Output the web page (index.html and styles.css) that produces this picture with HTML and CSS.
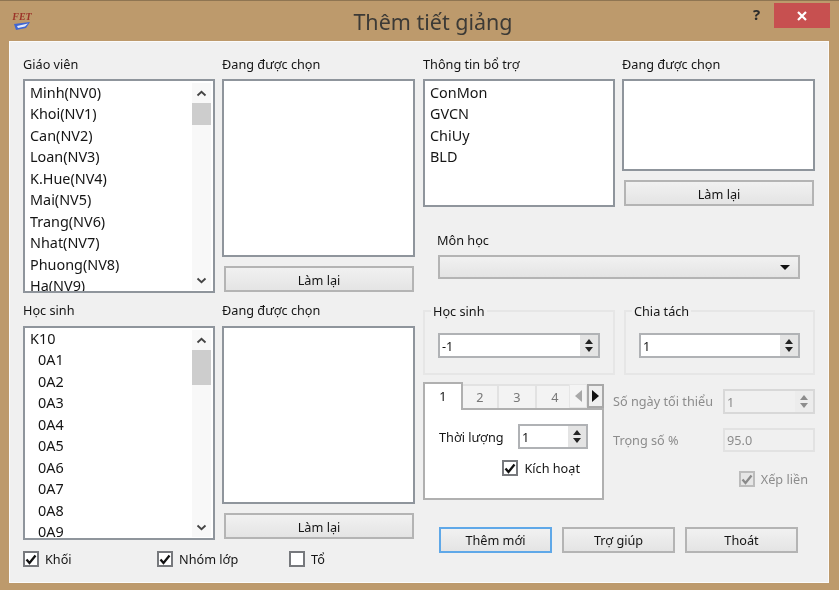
FILE: index.html
```html
<!DOCTYPE html>
<html lang="vi">
<head>
    <meta charset="UTF-8">
    <meta name="viewport" content="width=device-width, initial-scale=1.0">
    <title>Thêm tiết giảng</title>
    <link rel="stylesheet" href="styles.css">
</head>
<body>
    <div class="window">
        <div class="titlebar">
            <div class="appIcon">
                <span class="appIconText">FET</span>
                <svg width="16" height="8" viewBox="0 0 16 8"><polygon points="0,2 16,0 12,6 2,8" fill="#3f66d2"/><polygon points="3,4 14,1.5 11,4.5 4,6" fill="#e4eaf8"/></svg>
            </div>
            <div class="winTitle">Thêm tiết giảng</div>
            <div class="helpBtn">?</div>
            <div class="closeBtn">
                <svg width="12" height="12" viewBox="0 0 12 12"><path d="M2 2 L10 10 M10 2 L2 10" stroke="#fff" stroke-width="2.2"/></svg>
            </div>
        </div>
        <div class="client">
            <div class="colLeft">
                <div class="pick">
                    <div class="pickCol">
                        <div class="lbl">Giáo viên</div>
                        <div class="list listFull">
                            <div class="rows">
                                <div>Minh(NV0)</div>
                                <div>Khoi(NV1)</div>
                                <div>Can(NV2)</div>
                                <div>Loan(NV3)</div>
                                <div>K.Hue(NV4)</div>
                                <div>Mai(NV5)</div>
                                <div>Trang(NV6)</div>
                                <div>Nhat(NV7)</div>
                                <div>Phuong(NV8)</div>
                                <div>Ha(NV9)</div>
                            </div>
                            <div class="vbar">
                                <svg class="chev" width="11" height="7" viewBox="0 0 11 7"><path d="M1.5 5.5 L5.5 1.8 L9.5 5.5" fill="none" stroke="#444" stroke-width="1.8"/></svg>
                                <div class="track"><div class="thumb thumbA"></div></div>
                                <svg class="chev" width="11" height="7" viewBox="0 0 11 7"><path d="M1.5 1.5 L5.5 5.2 L9.5 1.5" fill="none" stroke="#444" stroke-width="1.8"/></svg>
                            </div>
                        </div>
                    </div>
                    <div class="pickCol">
                        <div class="lbl">Đang được chọn</div>
                        <div class="list listGrow"></div>
                        <button class="btn btnReset">Làm lại</button>
                    </div>
                </div>
                <div class="pick pickSecond">
                    <div class="pickCol">
                        <div class="lbl">Học sinh</div>
                        <div class="list listFull">
                            <div class="rows">
                                <div>K10</div>
                                <div class="sub">0A1</div>
                                <div class="sub">0A2</div>
                                <div class="sub">0A3</div>
                                <div class="sub">0A4</div>
                                <div class="sub">0A5</div>
                                <div class="sub">0A6</div>
                                <div class="sub">0A7</div>
                                <div class="sub">0A8</div>
                                <div class="sub">0A9</div>
                            </div>
                            <div class="vbar">
                                <svg class="chev" width="11" height="7" viewBox="0 0 11 7"><path d="M1.5 5.5 L5.5 1.8 L9.5 5.5" fill="none" stroke="#444" stroke-width="1.8"/></svg>
                                <div class="track"><div class="thumb thumbB"></div></div>
                                <svg class="chev" width="11" height="7" viewBox="0 0 11 7"><path d="M1.5 1.5 L5.5 5.2 L9.5 1.5" fill="none" stroke="#444" stroke-width="1.8"/></svg>
                            </div>
                        </div>
                    </div>
                    <div class="pickCol">
                        <div class="lbl">Đang được chọn</div>
                        <div class="list listGrow"></div>
                        <button class="btn btnReset">Làm lại</button>
                    </div>
                </div>
                <div class="checkRow">
                    <div class="check checkKhoi"><span class="box on"><svg width="12" height="11" viewBox="0 0 12 11"><path d="M1.5 5.5 L4.5 9 L10.5 1.5" fill="none" stroke="#111" stroke-width="2.3"/></svg></span>Khối</div>
                    <div class="check checkNhom"><span class="box on"><svg width="12" height="11" viewBox="0 0 12 11"><path d="M1.5 5.5 L4.5 9 L10.5 1.5" fill="none" stroke="#111" stroke-width="2.3"/></svg></span>Nhóm lớp</div>
                    <div class="check"><span class="box"></span>Tổ</div>
                </div>
            </div>
            <div class="colRight">
                <div class="pick pickInfo">
                    <div class="pickCol">
                        <div class="lbl">Thông tin bổ trợ</div>
                        <div class="list listFull">
                            <div class="rows">
                                <div>ConMon</div>
                                <div>GVCN</div>
                                <div>ChiUy</div>
                                <div>BLD</div>
                            </div>
                        </div>
                    </div>
                    <div class="pickCol">
                        <div class="lbl">Đang được chọn</div>
                        <div class="list listGrow"></div>
                        <button class="btn btnReset">Làm lại</button>
                    </div>
                </div>
                <div class="subject">
                    <div class="lbl lblSubject">Môn học</div>
                    <div class="combo"><span class="arrowDown"></span></div>
                </div>
                <div class="groups">
                    <fieldset class="group">
                        <legend>Học sinh</legend>
                        <div class="spin"><span class="spinVal">-1</span><span class="spinBtns"><i class="up"></i><i class="down"></i></span></div>
                    </fieldset>
                    <fieldset class="group">
                        <legend>Chia tách</legend>
                        <div class="spin"><span class="spinVal">1</span><span class="spinBtns"><i class="up"></i><i class="down"></i></span></div>
                    </fieldset>
                </div>
                <div class="lower">
                    <div class="tabs">
                        <div class="tabBar">
                            <div class="tab active">1</div>
                            <div class="tab t2">2</div>
                            <div class="tab t3">3</div>
                            <div class="tab t4">4</div>
                            <div class="tabScroll left"><span></span></div>
                            <div class="tabScroll right"><span></span></div>
                        </div>
                        <div class="tabPane">
                            <div class="durRow">
                                <span>Thời lượng</span>
                                <div class="spin spinSmall"><span class="spinVal">1</span><span class="spinBtns"><i class="up"></i><i class="down"></i></span></div>
                            </div>
                            <div class="check checkActive"><span class="box on"><svg width="12" height="11" viewBox="0 0 12 11"><path d="M1.5 5.5 L4.5 9 L10.5 1.5" fill="none" stroke="#111" stroke-width="2.3"/></svg></span>Kích hoạt</div>
                        </div>
                    </div>
                    <div class="disabledSide">
                        <div class="sideRow">
                            <span>Số ngày tối thiểu</span>
                            <div class="spin spinOff"><span class="spinVal">1</span><span class="spinBtns"><i class="up"></i><i class="down"></i></span></div>
                        </div>
                        <div class="sideRow sideRow2">
                            <span>Trọng số %</span>
                            <div class="fieldOff">95.0</div>
                        </div>
                        <div class="check checkOff"><span class="box"><svg width="12" height="11" viewBox="0 0 12 11"><path d="M1.5 5.5 L4.5 9 L10.5 1.5" fill="none" stroke="#8a8a8a" stroke-width="2.3"/></svg></span>Xếp liền</div>
                    </div>
                </div>
                <div class="actions">
                    <button class="btn btnAct btnMain">Thêm mới</button>
                    <button class="btn btnAct">Trợ giúp</button>
                    <button class="btn btnAct">Thoát</button>
                </div>
            </div>
        </div>
    </div>
</body>
</html>
```

FILE: styles.css
```css
* {
    box-sizing: border-box;
}
body {
    margin: 0;
    font-family: "Noto Sans", "Open Sans", sans-serif;
    font-size: 12.7px;
    color: #151515;
    background-color: #f0f0f0;
}
.window {
    width: 839px;
    height: 590px;
    padding: 2px 10px 7px 9px;
    background-color: #bd9a6c;
    display: flex;
    flex-direction: column;
    border-top: 1px solid #8f7552;
    filter: blur(0.35px);
}
.titlebar {
    height: 38px;
    display: flex;
    align-items: flex-start;
    position: relative;
    flex-shrink: 0;
}
.appIcon {
    position: absolute;
    left: 4px;
    top: 9px;
    width: 18px;
    display: flex;
    flex-direction: column;
    align-items: center;
}
.appIconText {
    font-family: "Liberation Serif", serif;
    font-style: italic;
    font-weight: bold;
    font-size: 10px;
    line-height: 10px;
    color: #9c3328;
}
.winTitle {
    width: 100%;
    text-align: center;
    font-size: 21.5px;
    line-height: 38px;
    padding-left: 28px;
    color: #3c3a36;
}
.helpBtn {
    position: absolute;
    left: 744px;
    top: 1px;
    font-size: 15px;
    font-weight: bold;
    line-height: 20px;
    color: #2b2b2b;
}
.closeBtn {
    position: absolute;
    right: -1px;
    top: 0;
    width: 56px;
    height: 25px;
    background-color: #c75050;
    display: flex;
    align-items: center;
    justify-content: center;
}
.client {
    flex: 1;
    display: flex;
    gap: 8px;
    padding: 13px 13px 0 13px;
    background-color: #f0f0f0;
    border: 1px solid #fbfbfb;
}
.colLeft,
.colRight {
    width: 392px;
    display: flex;
    flex-direction: column;
}
.pick {
    display: grid;
    grid-template-columns: 192px 193px;
    grid-template-rows: 238px;
    column-gap: 7px;
    height: 238px;
}
.pickSecond {
    margin-top: 9px;
}
.pickSecond .lbl {
    line-height: 16px;
}
.pickInfo {
    grid-template-rows: 152px;
    height: 152px;
}
.pickCol {
    display: flex;
    flex-direction: column;
    min-height: 0;
}
.lbl {
    height: 24px;
    line-height: 18px;
    flex-shrink: 0;
}
.list {
    background-color: #fff;
    border: 2px solid #8f959c;
    overflow: hidden;
    display: flex;
    min-height: 0;
}
.listFull {
    flex: 1;
}
.listGrow {
    flex: 1;
}
.rows {
    flex: 1;
    padding: 1px 0 0 5px;
    font-size: 14.4px;
    line-height: 21.45px;
    white-space: nowrap;
    overflow: hidden;
}
.pickSecond .rows {
    padding-top: 0;
}
.sub {
    padding-left: 8px;
}
.vbar {
    width: 19px;
    margin: 2px 2px 1px 0;
    background-color: #f8f8f8;
    display: flex;
    flex-direction: column;
    align-items: center;
}
.chev {
    flex-shrink: 0;
    margin: 6.5px 0;
}
.track {
    flex: 1;
    width: 100%;
}
.thumb {
    width: 100%;
    background-color: #cdcdcd;
}
.thumbA {
    height: 22px;
}
.thumbB {
    height: 35px;
}
.btn {
    font-family: inherit;
    font-size: 12.7px;
    color: #151515;
    background: linear-gradient(#f1f1f1, #e4e4e4);
    border: 2px solid #b4b4b4;
    padding: 0;
    height: 26px;
}
.btnReset {
    margin: 9px 1px 1px 2px;
    padding-top: 2px;
    flex-shrink: 0;
}
.checkRow {
    display: flex;
    margin-top: 11px;
}
.check {
    display: flex;
    align-items: center;
    gap: 6px;
    height: 16px;
}
.checkKhoi {
    width: 134px;
}
.checkNhom {
    width: 132px;
}
.box {
    width: 16px;
    height: 16px;
    background-color: #fff;
    border: 2px solid #77797d;
    display: flex;
    align-items: center;
    justify-content: center;
    flex-shrink: 0;
}
.subject {
    margin: 24px 0 0 15px;
}
.lblSubject {
    margin-left: -1px;
}
.combo {
    width: 362px;
    height: 24px;
    background: linear-gradient(#f1f1f1, #e4e4e4);
    border: 2px solid #b4b4b4;
    display: flex;
    align-items: center;
    justify-content: flex-end;
    padding-right: 8px;
}
.arrowDown {
    border-left: 5px solid transparent;
    border-right: 5px solid transparent;
    border-top: 5px solid #111;
}
.groups {
    display: flex;
    gap: 9px;
    margin-top: 23px;
}
.group {
    width: 192px;
    height: 73px;
    margin: 0;
    padding: 13px 13px 0 13px;
    border: 2px solid #e6e6e6;
    min-width: 0;
}
.group legend {
    padding: 0 2px;
    margin-left: -7px;
    line-height: 18px;
}
.group:last-child {
    width: 191px;
}
.spin {
    height: 25px;
    background-color: #fff;
    border: 2px solid #b0b2b5;
    display: flex;
    align-items: center;
    justify-content: space-between;
}
.spinVal {
    padding: 1px 0 0 2px;
}
.spinBtns {
    width: 18px;
    height: 100%;
    background-color: #e4e4e4;
    padding: 1px;
    display: flex;
    flex-direction: column;
    align-items: center;
    justify-content: center;
    gap: 3px;
    flex-shrink: 0;
}
.spinBtns i {
    display: block;
    border-left: 4px solid transparent;
    border-right: 4px solid transparent;
}
.spinBtns .up {
    border-bottom: 5px solid #222;
}
.spinBtns .down {
    border-top: 5px solid #222;
}
.lower {
    display: flex;
    margin-top: 7px;
    height: 145px;
}
.tabs {
    width: 181px;
}
.tabBar {
    display: flex;
    align-items: flex-end;
    height: 26px;
    position: relative;
}
.tab {
    height: 24px;
    text-align: center;
    line-height: 22px;
    color: #777;
    background-color: #f3f3f3;
    border: 2px solid #e2e2e2;
    border-left: 0;
    border-bottom: 0;
}
.tab.active {
    width: 40px;
    height: 28px;
    line-height: 24px;
    background-color: #fff;
    color: #151515;
    border: 2px solid #b0b0b0;
    border-bottom: 0;
    position: relative;
    z-index: 1;
    margin-bottom: -2px;
}
.t2 {
    width: 36px;
}
.t3 {
    width: 38px;
}
.t4 {
    width: 38px;
}
.tabScroll {
    width: 18px;
    height: 24px;
    display: flex;
    align-items: center;
    justify-content: center;
    position: relative;
}
.tabScroll.left {
    margin-left: -6px;
    background-color: #f4f4f4;
    border: 1px solid #e6e6e6;
}
.tabScroll.left span {
    border-top: 6px solid transparent;
    border-bottom: 6px solid transparent;
    border-right: 7px solid #a8a8a8;
}
.tabScroll.right {
    width: 17px;
    background-color: #eeeeee;
    border: 2px solid #a8a8a8;
}
.tabScroll.right span {
    border-top: 6px solid transparent;
    border-bottom: 6px solid transparent;
    border-left: 7px solid #111;
}
.tabPane {
    height: 92px;
    background-color: #fff;
    border: 2px solid #b0b0b0;
    padding: 14px 14px 0 14px;
}
.durRow {
    display: flex;
    justify-content: space-between;
    align-items: center;
}
.spinSmall {
    width: 70px;
}
.checkActive {
    margin: 11px 8px 0 0;
    justify-content: flex-end;
}
.disabledSide {
    flex: 1;
    margin-left: 9px;
    padding-top: 7px;
    color: #8c8c8c;
}
.sideRow {
    display: flex;
    justify-content: space-between;
    align-items: center;
    height: 24px;
}
.sideRow2 {
    margin-top: 15px;
}
.spinOff {
    width: 92px;
    border-color: #d8d8d8;
    background-color: #f0f0f0;
}
.spinOff .spinBtns {
    background-color: #ececec;
}
.spinOff .up {
    border-bottom-color: #8c8c8c;
}
.spinOff .down {
    border-top-color: #8c8c8c;
}
.fieldOff {
    width: 92px;
    height: 24px;
    line-height: 20px;
    padding-left: 2px;
    border: 2px solid #e2e2e2;
    background-color: #f0f0f0;
}
.checkOff {
    margin-top: 19px;
    justify-content: flex-end;
    padding-right: 7px;
}
.checkOff .box {
    border-color: #bcbcbc;
    background-color: #e6e6e6;
}
.actions {
    display: flex;
    margin: 0 0 0 16px;
    gap: 10px;
}
.btnAct {
    width: 113px;
    height: 26px;
}
.btnMain {
    border-color: #5fa8e8;
}
```
